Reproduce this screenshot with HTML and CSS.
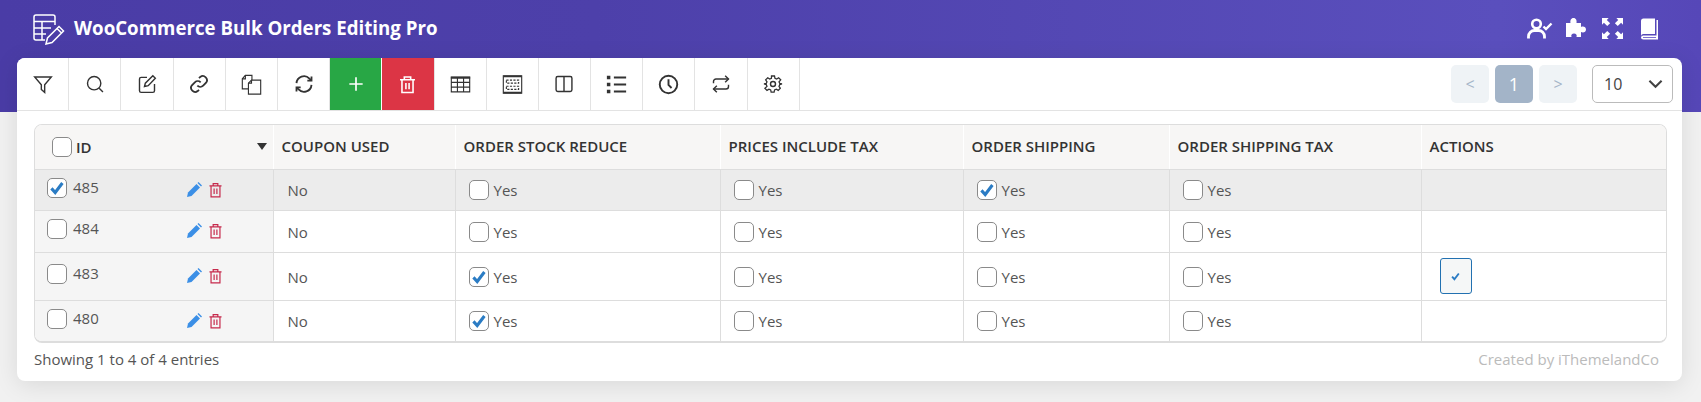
FILE: index.html
```html
<!DOCTYPE html>
<html lang="en">
<head>
<meta charset="utf-8">
<title>WooCommerce Bulk Orders Editing Pro</title>
<link rel="stylesheet" href="styles.css">
</head>
<body>
<svg class="defs" width="0" height="0" aria-hidden="true">
  <symbol id="tick" viewBox="0 0 20 20"><path d="M3.800 10.400l4.200 4.600 8-10.500" fill="none" stroke="#2b7cc4" stroke-width="3.400"/></symbol>
  <symbol id="pen" viewBox="0 0 16 16"><path d="M1 15l1-4.500L10.500 2l3.500 3.500L5.500 14z" fill="#3b8fe6"/><path d="M11.500 1l1-1 3.500 3.500-1 1z" fill="#3b8fe6"/></symbol>
  <symbol id="bin" viewBox="0 0 14 16"><path d="M.5 3.500h13M4.500 3.500V1.200h5v2.300M2.200 3.500v11.800h9.600V3.500M5.500 6.500v5.800M8.500 6.500v5.800" fill="none" stroke="#c62a4c" stroke-width="1.300"/></symbol>
</svg>
<header class="topbar">
  <div class="brand">
    <svg class="logo" viewBox="0 0 32 31" fill="none" stroke="#fff" stroke-width="1.500"><path d="M22 11V3a2 2 0 0 0-2-2H3a2 2 0 0 0-2 2v21a2 2 0 0 0 2 2h9M1 7.500h21M1 14h17M1 20h12M9 7.500V26"/><path d="M13 30l1.500-6L26 12.500l4.500 4.500L19 28.500zM24 14.500l4.500 4.500"/></svg>
    <span class="brand-name">WooCommerce Bulk Orders Editing Pro</span>
  </div>
  <div class="top-icons">
    <svg class="ti-user" viewBox="0 0 26 21"><circle cx="9.500" cy="6" r="4.300" fill="none" stroke="#fff" stroke-width="2.600"/><path d="M1.500 20.500v-2a6 6 0 0 1 6-6h4a6 6 0 0 1 6 6v2" fill="none" stroke="#fff" stroke-width="2.800"/><path d="M16.500 8.500l2.500 2.500 5.500-5.500" fill="none" stroke="#fff" stroke-width="2.400"/></svg>
    <svg class="ti-puzzle" viewBox="0 0 22 21"><path d="M1 6h4.500C5 3.500 6 1 8.500 1S12 3.500 11.500 6H16v4c2.500-1 5 0 5 2.500S18.500 16 16 15v5h-4.500c.8-2-.5-3.500-2.500-3.500S5.700 18 6.500 20H1z" fill="#fff"/></svg>
    <svg class="ti-expand" viewBox="0 0 22 22" fill="#fff"><path d="M0 0h7L5 2l3.500 3.500-3 3L2 5 0 7zM22 0v7l-2-2-3.500 3.500-3-3L17 2l-2-2zM0 22v-7l2 2 3.500-3.500 3 3L5 20l2 2zM22 22h-7l2-2-3.500-3.500 3-3L20 17l2-2z"/></svg>
    <svg class="ti-book" viewBox="0 0 19 22"><path d="M1 3a2.500 2.500 0 0 1 2.500-2.500H15V16H3.500A2.500 2.500 0 0 0 1 18z" fill="#fff"/><path d="M16.500 2H18v19.500H3.500A2.500 2.500 0 0 1 1 19a2.500 2.500 0 0 1 2.500-1.500h13z" fill="#fff"/><path d="M3 19.500h13" stroke="#7c6fd0" stroke-width="1"/></svg>
  </div>
</header>
<main class="card">
  <div class="toolbar">
    <div class="tools">
      <button class="tool"><svg viewBox="0 0 24 24" class="ic"><path d="M2 3.500h20l-8 9.500v9l-4-3.500V13z"/></svg></button>
      <button class="tool"><svg viewBox="0 0 24 24" class="ic"><circle cx="11" cy="11" r="8"/><path d="M17 17l4.500 4.500"/></svg></button>
      <button class="tool"><svg viewBox="0 0 24 24" class="ic"><path d="M12 4H5a2 2 0 0 0-2 2v14a2 2 0 0 0 2 2h14a2 2 0 0 0 2-2v-8"/><path d="M9 15l1-4L19 2l3 3-8.500 9z"/></svg></button>
      <button class="tool"><svg viewBox="0 0 24 24" class="ic ic-bold"><path d="M10 14a5 5 0 0 0 7 0l3.500-3.500a5 5 0 0 0-7-7L12 5"/><path d="M14 10a5 5 0 0 0-7 0l-3.500 3.500a5 5 0 0 0 7 7L12 19"/></svg></button>
      <button class="tool"><svg viewBox="0 0 24 24" class="ic ic-wide ic-thin"><path d="M8 17H1.500V5.500L5 1.500h7.500V7"/><path d="M5 1.500v4H1.500"/><path d="M12 7h10.500v16H8.500V10.500z"/><path d="M12 7v3.500H8.500"/></svg></button>
      <button class="tool"><svg viewBox="0 0 24 24" class="ic ic-bold"><path d="M3 11a9 9 0 0 1 15.500-5.500L21 8"/><path d="M21 3v5h-5"/><path d="M21 13a9 9 0 0 1-15.500 5.500L3 16"/><path d="M3 21v-5h5"/></svg></button>
      <button class="tool tool-add"><svg viewBox="0 0 24 24" class="ic ic-white"><path d="M12 4v16M4 12h16"/></svg></button>
      <button class="tool tool-del"><svg viewBox="0 0 24 24" class="ic ic-white ic-tall"><path d="M2.500 6h19M8 6V2.500h8V6M5 6v16h14V6M10 10v8M14 10v8"/></svg></button>
      <button class="tool"><svg viewBox="0 0 24 24" class="ic ic-wide ic-thin"><path d="M1.500 3.500h21v17h-21zM1.500 9.500h21M1.500 15h21M8.500 3.500v17M15.500 3.500v17"/><path d="M1 4.200h22" stroke-width="2.200"/></svg></button>
      <button class="tool"><svg viewBox="0 0 24 24" class="ic ic-wide ic-thin"><path d="M1.500 2h21v20h-21z"/><path d="M1.500 2.600h21M1.500 21.400h21" stroke-width="2"/><path d="M5 7h14v3.500H5zM5 14h14v3.500H5z" stroke-dasharray="2.500 1.500"/></svg></button>
      <button class="tool"><svg viewBox="0 0 24 24" class="ic"><rect x="2.500" y="3" width="19" height="18" rx="2"/><path d="M12 3v18"/></svg></button>
      <button class="tool"><svg viewBox="0 0 24 24" class="ic ic-bold ic-wide"><path d="M9 4h14M9 12h14M9 20h14"/><path d="M1 4h4M1 12h4M1 20h4" stroke-width="4"/></svg></button>
      <button class="tool"><svg viewBox="0 0 24 24" class="ic ic-bold ic-wide"><circle cx="12" cy="12" r="10"/><path d="M12 6v6.500l3.500 3.500"/></svg></button>
      <button class="tool"><svg viewBox="0 0 24 24" class="ic"><path d="M3 11V9a3 3 0 0 1 3-3h15"/><path d="M17 2l4 4-4 4"/><path d="M21 13v2a3 3 0 0 1-3 3H3"/><path d="M7 22l-4-4 4-4"/></svg></button>
      <button class="tool"><svg viewBox="0 0 24 24" class="ic"><circle cx="12" cy="12" r="3"/><path d="M10 2h4l.6 3 2.300 1 2.600-1.700 2.800 2.800L20 9.700l1 2.300 3 .6v0l-3 .9-1 2.300 1.800 2.600-2.800 2.800-2.600-1.700-2.300 1-.6 3h-4l-.6-3-2.300-1-2.600 1.700-2.800-2.800L4 15.800l-1-2.300-3-.9v0l3-.6 1-2.300L2.200 7.100 5 4.300l2.600 1.700 2.300-1z" transform="translate(1.200 .6) scale(.9)"/></svg></button>
    </div>
    <div class="pager">
      <span class="page">&lt;</span>
      <span class="page page-on">1</span>
      <span class="page">&gt;</span>
      <div class="per-page"><span>10</span><svg viewBox="0 0 16 10" class="chev"><path d="M1.500 1.500L8 8l6.500-6.500" fill="none" stroke="#444" stroke-width="2.200"/></svg></div>
    </div>
  </div>
  <div class="table-wrap">
    <table class="grid">
      <colgroup>
        <col class="c1"><col class="c2"><col class="c3"><col class="c4"><col class="c5"><col class="c6"><col class="c7">
      </colgroup>
      <thead>
        <tr>
          <th class="th-id"><div class="id-head"><span class="cb"></span><span>ID</span><i class="sort"></i></div></th>
          <th>Coupon Used</th><th>Order Stock Reduce</th><th>Prices Include Tax</th><th>Order Shipping</th><th>Order Shipping Tax</th><th>Actions</th>
        </tr>
      </thead>
      <tbody>
        <tr class="selected">
          <td class="td-id"><div class="id-cell"><span class="cb"><svg><use href="#tick"/></svg></span><span class="num">485</span><span class="row-act"><svg class="a-pen"><use href="#pen"/></svg><svg class="a-bin"><use href="#bin"/></svg></span></div></td>
          <td class="val">No</td>
          <td><label class="yes"><span class="cb"></span>Yes</label></td>
          <td><label class="yes"><span class="cb"></span>Yes</label></td>
          <td><label class="yes"><span class="cb"><svg><use href="#tick"/></svg></span>Yes</label></td>
          <td><label class="yes"><span class="cb"></span>Yes</label></td>
          <td></td>
        </tr>
        <tr class="second">
          <td class="td-id"><div class="id-cell"><span class="cb"></span><span class="num">484</span><span class="row-act"><svg class="a-pen"><use href="#pen"/></svg><svg class="a-bin"><use href="#bin"/></svg></span></div></td>
          <td class="val">No</td>
          <td><label class="yes"><span class="cb"></span>Yes</label></td>
          <td><label class="yes"><span class="cb"></span>Yes</label></td>
          <td><label class="yes"><span class="cb"></span>Yes</label></td>
          <td><label class="yes"><span class="cb"></span>Yes</label></td>
          <td></td>
        </tr>
        <tr class="tall">
          <td class="td-id"><div class="id-cell"><span class="cb"></span><span class="num">483</span><span class="row-act"><svg class="a-pen"><use href="#pen"/></svg><svg class="a-bin"><use href="#bin"/></svg></span></div></td>
          <td class="val">No</td>
          <td><label class="yes"><span class="cb"><svg><use href="#tick"/></svg></span>Yes</label></td>
          <td><label class="yes"><span class="cb"></span>Yes</label></td>
          <td><label class="yes"><span class="cb"></span>Yes</label></td>
          <td><label class="yes"><span class="cb"></span>Yes</label></td>
          <td class="td-act"><button class="act-btn"><svg viewBox="0 0 20 20"><use href="#tick"/></svg></button></td>
        </tr>
        <tr>
          <td class="td-id"><div class="id-cell"><span class="cb"></span><span class="num">480</span><span class="row-act"><svg class="a-pen"><use href="#pen"/></svg><svg class="a-bin"><use href="#bin"/></svg></span></div></td>
          <td class="val">No</td>
          <td><label class="yes"><span class="cb"><svg><use href="#tick"/></svg></span>Yes</label></td>
          <td><label class="yes"><span class="cb"></span>Yes</label></td>
          <td><label class="yes"><span class="cb"></span>Yes</label></td>
          <td><label class="yes"><span class="cb"></span>Yes</label></td>
          <td></td>
        </tr>
      </tbody>
    </table>
  </div>
  <footer class="foot">
    <span class="entries">Showing 1 to 4 of 4 entries</span>
    <span class="credit">Created by iThemelandCo</span>
  </footer>
</main>
</body>
</html>
```
FILE: styles.css
```css
* { box-sizing: border-box; }
html, body { margin: 0; height: 402px; overflow: hidden; }
body {
  background: #f1f1f1;
  font-family: "Open Sans", sans-serif;
  font-size: 15px;
  color: #444;
}
.defs { position: absolute; }
.topbar {
  height: 112px;
  background: linear-gradient(90deg, #4a3ca6 0%, #4d40aa 35%, #5a4fbd 88%, #5647b8 100%);
  display: flex;
  justify-content: space-between;
  padding: 14px 42px 0 33px;
}
.brand { display: flex; align-items: flex-start; gap: 9px; }
.logo { width: 32px; height: 31px; }
.brand-name { font-size: 18.700px; font-weight: 700; color: #fff; line-height: 28px; }
.top-icons { display: flex; align-items: flex-start; padding-top: 4px; }
.ti-user { width: 26px; height: 21px; }
.ti-puzzle { width: 22px; height: 21px; margin: -1px 0 0 12px; }
.ti-expand { width: 21px; height: 21px; margin-left: 15px; }
.ti-book { width: 19px; height: 22px; margin-left: 17px; }

.card {
  margin: -54px 19px 0 17px;
  height: 323px;
  background: #fff;
  border-radius: 8px;
  box-shadow: 0 4px 24px rgba(0, 0, 0, .1);
  overflow: hidden;
}
.toolbar {
  height: 53px;
  border-bottom: 1px solid #e3e3e3;
  display: flex;
  justify-content: space-between;
}
.tools { display: flex; }
.tool {
  flex: 0 0 52.200px;
  height: 52px;
  padding: 0;
  background: #fff;
  border: 0;
  border-right: 1px solid #e3e3e3;
  display: flex;
  align-items: center;
  justify-content: center;
}
.tool-add { background: #28a745; border-right-color: #fff; }
.tool-del { background: #dc3545; }
.ic { width: 20px; height: 20px; fill: none; stroke: #333; stroke-width: 1.700; }
.ic-white { stroke: #fff; stroke-width: 2; }
.ic-bold { stroke-width: 2.200; }
.ic-thin { stroke-width: 1.300; }
.ic-wide { width: 21px; height: 21px; }
.ic-tall { width: 19px; height: 21px; }

.pager { display: flex; align-items: flex-start; gap: 6px; padding: 7px 9px 0 0; }
.page {
  width: 38px;
  height: 38px;
  border-radius: 5px;
  background: #eff3f6;
  color: #a5b5c8;
  display: flex;
  align-items: center;
  justify-content: center;
  font-size: 16px;
}
.page-on { background: #a3b4c8; color: #fff; font-size: 18px; }
.per-page {
  width: 81px;
  height: 38px;
  margin-left: 9px;
  border: 1px solid #bbb;
  border-radius: 5px;
  display: flex;
  align-items: center;
  justify-content: space-between;
  padding: 0 9px 0 11px;
  font-size: 16px;
  color: #444;
}
.chev { width: 15px; height: 10px; }

.table-wrap {
  margin: 13px 15px 0 17px;
  border: 1px solid #ddd;
  border-bottom-width: 2px;
  border-radius: 8px;
  overflow: hidden;
}
.grid { width: 100%; border-collapse: collapse; table-layout: fixed; }
.c1 { width: 238px; } .c2 { width: 182px; } .c3 { width: 265px; } .c4 { width: 243px; }
.c5 { width: 206px; } .c6 { width: 252px; } .c7 { width: 245px; }
th {
  height: 44px;
  background: #f7f6f5;
  border-left: 1px solid #fff;
  border-bottom: 1px solid #ddd;
  text-align: left;
  padding: 0 8px 2px;
  font-size: 15px;
  font-weight: 600;
  text-transform: uppercase;
  color: #333;
}
th:first-child { border-left: 0; padding: 0 6px 0 17px; }
.id-head { display: flex; align-items: center; gap: 4px; }
.sort {
  margin-left: auto;
  border-style: solid;
  border-width: 7px 5px 0;
  border-color: #333 transparent transparent;
}
td {
  height: 41px;
  border-left: 1px solid #ddd;
  border-top: 1px solid #ddd;
  padding: 1px 13px 0;
  background: #fff;
}
.second td { height: 42px; }
.tall td { height: 48px; }
tbody tr:first-child td { border-top: 0; }
td:first-child { border-left: 0; }
.td-id { background: #f5f5f5; padding: 0 12px; }
.selected td { background: #ececec; }
.id-cell { display: flex; align-items: center; margin-bottom: 4px; color: #555; }
.num { margin-left: 6px; position: relative; top: -1px; }
.row-act { margin-left: auto; display: flex; gap: 7px; padding-right: 39px; position: relative; top: 2px; }
.a-pen { width: 16px; height: 16px; }
.a-bin { width: 13px; height: 16px; }
td.val { color: #555; padding-left: 14px; }
.cb {
  flex: none;
  display: inline-flex;
  width: 20px;
  height: 20px;
  border: 1px solid #8a8a8a;
  border-radius: 5px;
  background: #fff;
  overflow: hidden;
}
.cb svg { width: 18px; height: 18px; }
.yes { display: flex; align-items: center; gap: 5px; color: #555; }
.td-act { padding: 0 18px; }
.act-btn {
  display: flex;
  align-items: center;
  justify-content: center;
  width: 32px;
  height: 36px;
  padding: 0;
  background: #f5f7f7;
  border: 1px solid #2271b1;
  border-radius: 3px;
}
.act-btn svg { width: 11px; height: 11px; }

.foot {
  display: flex;
  justify-content: space-between;
  padding: 3px 23px 0 17px;
  line-height: 26px;
  color: #555;
}
.credit { color: #bbb; }
```
